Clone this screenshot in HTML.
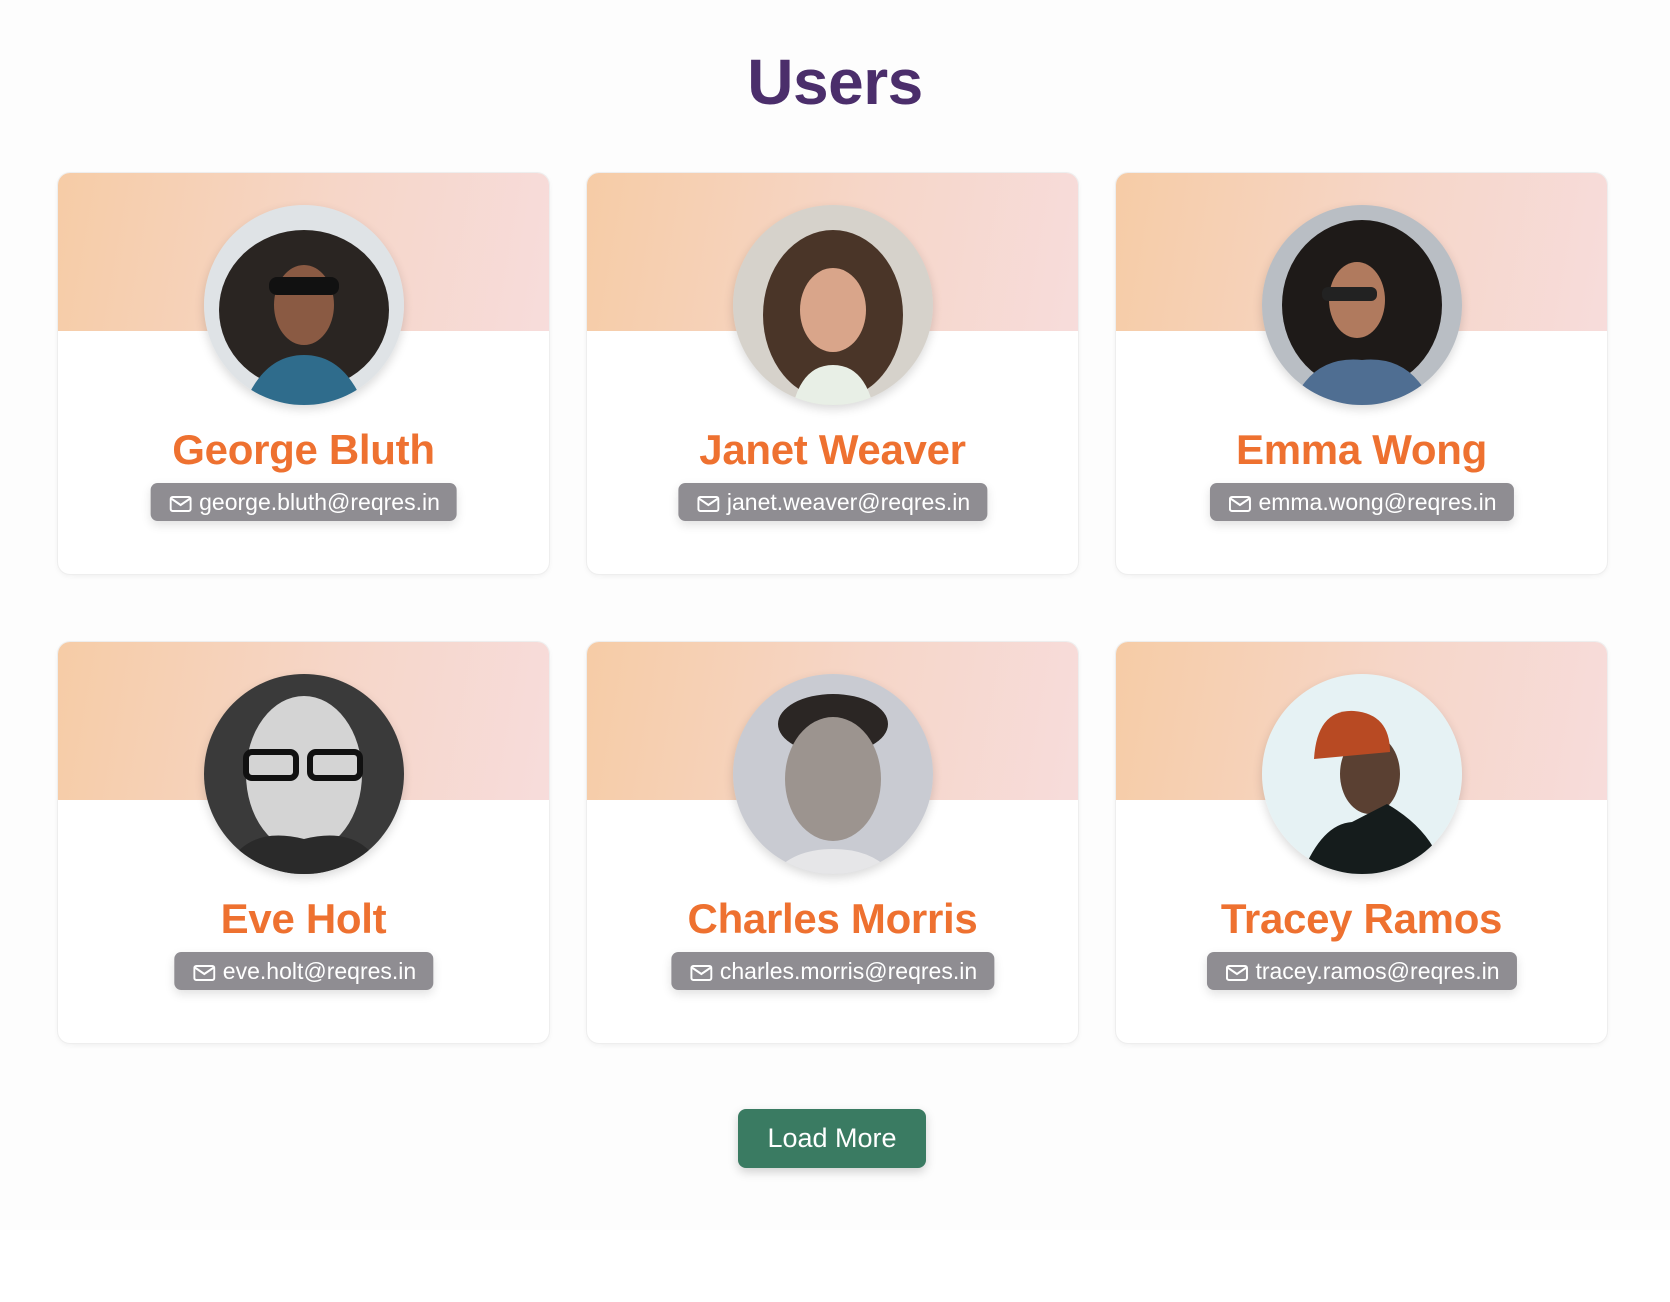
<!DOCTYPE html>
<html><head><meta charset="utf-8"><style>
*{margin:0;padding:0;box-sizing:border-box}
html,body{width:1670px;height:1302px;background:#fff;overflow:hidden}
body{font-family:"Liberation Sans",sans-serif;position:relative}
.bg{position:absolute;left:0;top:0;width:1670px;height:1230px;background:#fdfdfd}
h1{position:absolute;left:0;width:1670px;top:44px;text-align:center;font-size:64px;font-weight:bold;color:#4b2e6b;letter-spacing:-0.5px;line-height:76px}
.card{position:absolute;width:491px;height:401px;background:#fff;border-radius:12px;box-shadow:0 0 0 1px #eeeeee,0 2px 6px rgba(0,0,0,.06);overflow:hidden}
.ban{position:absolute;left:0;top:0;width:100%;height:158px;background:linear-gradient(100deg,#f6cca6,#f6d6c8 55%,#f7dcdb)}
.av{position:absolute;left:146px;top:32px;width:200px;height:200px;border-radius:50%;overflow:hidden;box-shadow:0 4px 10px rgba(0,0,0,.15)}
.nm{position:absolute;left:0;width:100%;top:252px;text-align:center;font-size:42px;font-weight:bold;color:#ee7130;line-height:50px;letter-spacing:-0.3px}
.em{position:absolute;top:310px;left:50%;transform:translateX(-50%);height:38px;background:#8f8d92;border-radius:7px;color:#fff;font-size:23px;line-height:38px;padding:0 17px 0 19px;white-space:nowrap;box-shadow:0 4px 10px rgba(0,0,0,.12)}
.em svg{display:inline-block;vertical-align:-2px;margin-right:8px}
.btn{position:absolute;left:738px;top:1109px;width:188px;height:59px;background:#3a7b62;border-radius:8px;color:#fff;font-size:27px;text-align:center;line-height:59px;box-shadow:0 4px 10px rgba(0,0,0,.18)}
</style></head><body>
<div class="bg"></div>
<h1>Users</h1>

<div class="card" style="left:58px;top:173px"><div class="ban"></div>
<div class="av"><svg width="200" height="200"><rect width="200" height="200" fill="#dfe3e6"/><ellipse cx="100" cy="105" rx="85" ry="80" fill="#2a2522"/><ellipse cx="100" cy="100" rx="30" ry="40" fill="#8a5a43"/><rect x="65" y="72" width="70" height="18" rx="8" fill="#111"/><path d="M40 200 Q60 150 100 150 Q140 150 160 200Z" fill="#2f6c8c"/></svg></div>
<div class="nm">George Bluth</div>
<div class="em"><svg width="22" height="16" viewBox="0 0 22 16"><rect x="1" y="1" width="20" height="14" rx="2" fill="none" stroke="#fff" stroke-width="2"/><path d="M1.5 2.5 L11 9 L20.5 2.5" fill="none" stroke="#fff" stroke-width="2"/></svg>george.bluth@reqres.in</div></div>

<div class="card" style="left:587px;top:173px"><div class="ban"></div>
<div class="av"><svg width="200" height="200"><rect width="200" height="200" fill="#d6d2cb"/><ellipse cx="100" cy="110" rx="70" ry="85" fill="#4a3528"/><ellipse cx="100" cy="105" rx="33" ry="42" fill="#d9a58a"/><path d="M60 200 Q70 160 100 160 Q130 160 140 200Z" fill="#e8efe6"/></svg></div>
<div class="nm">Janet Weaver</div>
<div class="em"><svg width="22" height="16" viewBox="0 0 22 16"><rect x="1" y="1" width="20" height="14" rx="2" fill="none" stroke="#fff" stroke-width="2"/><path d="M1.5 2.5 L11 9 L20.5 2.5" fill="none" stroke="#fff" stroke-width="2"/></svg>janet.weaver@reqres.in</div></div>

<div class="card" style="left:1116px;top:173px"><div class="ban"></div>
<div class="av"><svg width="200" height="200"><rect width="200" height="200" fill="#b9bec4"/><ellipse cx="100" cy="100" rx="80" ry="85" fill="#1e1a18"/><ellipse cx="95" cy="95" rx="28" ry="38" fill="#b07a5e"/><rect x="60" y="82" width="55" height="14" rx="6" fill="#222"/><path d="M30 200 Q50 150 100 155 Q150 150 170 200Z" fill="#4f6e92"/></svg></div>
<div class="nm">Emma Wong</div>
<div class="em"><svg width="22" height="16" viewBox="0 0 22 16"><rect x="1" y="1" width="20" height="14" rx="2" fill="none" stroke="#fff" stroke-width="2"/><path d="M1.5 2.5 L11 9 L20.5 2.5" fill="none" stroke="#fff" stroke-width="2"/></svg>emma.wong@reqres.in</div></div>

<div class="card" style="left:58px;top:642px"><div class="ban"></div>
<div class="av"><svg width="200" height="200"><rect width="200" height="200" fill="#3a3a3a"/><ellipse cx="100" cy="100" rx="58" ry="78" fill="#d4d4d4"/><rect x="42" y="78" width="50" height="26" rx="6" fill="none" stroke="#111" stroke-width="6"/><rect x="106" y="78" width="50" height="26" rx="6" fill="none" stroke="#111" stroke-width="6"/><path d="M20 200 Q40 150 100 165 Q160 150 180 200Z" fill="#2a2a2a"/></svg></div>
<div class="nm">Eve Holt</div>
<div class="em"><svg width="22" height="16" viewBox="0 0 22 16"><rect x="1" y="1" width="20" height="14" rx="2" fill="none" stroke="#fff" stroke-width="2"/><path d="M1.5 2.5 L11 9 L20.5 2.5" fill="none" stroke="#fff" stroke-width="2"/></svg>eve.holt@reqres.in</div></div>

<div class="card" style="left:587px;top:642px"><div class="ban"></div>
<div class="av"><svg width="200" height="200"><rect width="200" height="200" fill="#c9cbd2"/><ellipse cx="100" cy="50" rx="55" ry="30" fill="#2b2624"/><ellipse cx="100" cy="105" rx="48" ry="62" fill="#9c948f"/><path d="M40 200 Q60 175 100 175 Q140 175 160 200Z" fill="#e6e6e8"/></svg></div>
<div class="nm">Charles Morris</div>
<div class="em"><svg width="22" height="16" viewBox="0 0 22 16"><rect x="1" y="1" width="20" height="14" rx="2" fill="none" stroke="#fff" stroke-width="2"/><path d="M1.5 2.5 L11 9 L20.5 2.5" fill="none" stroke="#fff" stroke-width="2"/></svg>charles.morris@reqres.in</div></div>

<div class="card" style="left:1116px;top:642px"><div class="ban"></div>
<div class="av"><svg width="200" height="200"><rect width="200" height="200" fill="#e6f2f4"/><ellipse cx="108" cy="100" rx="30" ry="40" fill="#5a4032"/><path d="M52 85 Q55 35 92 37 Q128 40 128 78 Z" fill="#b84a23"/><path d="M40 200 Q60 150 90 148 L125 130 Q160 150 175 180 L180 200Z" fill="#151c1c"/></svg></div>
<div class="nm">Tracey Ramos</div>
<div class="em"><svg width="22" height="16" viewBox="0 0 22 16"><rect x="1" y="1" width="20" height="14" rx="2" fill="none" stroke="#fff" stroke-width="2"/><path d="M1.5 2.5 L11 9 L20.5 2.5" fill="none" stroke="#fff" stroke-width="2"/></svg>tracey.ramos@reqres.in</div></div>

<div class="btn">Load More</div>
</body></html>
